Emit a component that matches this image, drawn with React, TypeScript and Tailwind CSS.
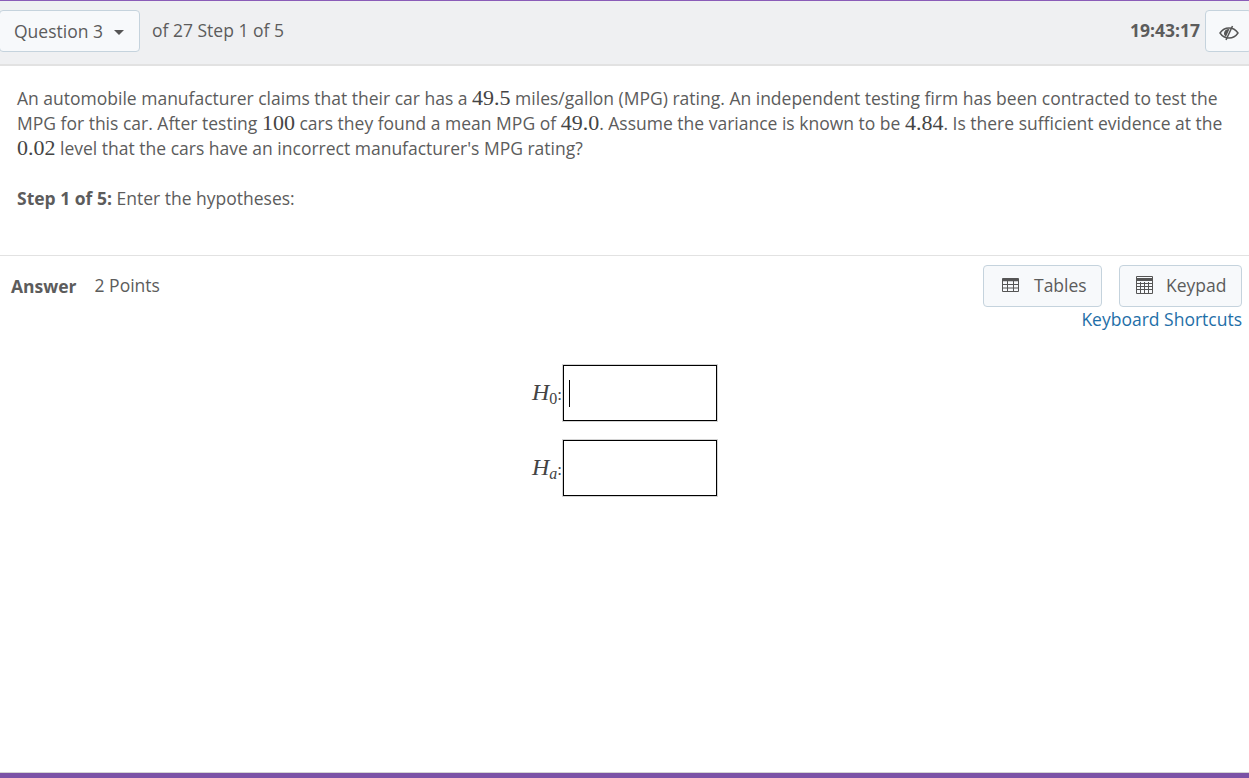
const sans = { fontFamily: '"Open Sans", sans-serif' };

function Num({ children }: { children: React.ReactNode }) {
  return <span className="font-['Liberation_Serif',serif] text-[22px] leading-none text-[#444]">{children}</span>;
}

function TableIcon() {
  return (
    <svg width="17" height="14" viewBox="0 0 17 14" className="text-[#555]">
      <path d="M0.5 0.5H16.5V13.5H0.5Z" fill="none" stroke="currentColor" />
      <path d="M0.5 2H16.5" stroke="currentColor" strokeWidth="2.5" />
      <path d="M1 6.5H16M1 10H16M5.5 3V13M11.5 3V13" stroke="currentColor" />
    </svg>
  );
}

function KeypadIcon() {
  return (
    <svg width="17" height="18" viewBox="0 0 17 18" className="text-[#555]">
      <path d="M0.5 0.5H16.5V17.5H0.5Z" fill="none" stroke="currentColor" />
      <path d="M1 3.5H16" stroke="currentColor" strokeWidth="3" fill="none" />
      <path d="M1 7.5H16M1 10.5H16M1 13.5H16M4.5 6V17M8.5 6V17M12.5 6V17" stroke="currentColor" />
    </svg>
  );
}

function EyeIcon() {
  return (
    <svg width="20" height="16" viewBox="0 0 20 16" fill="none" className="text-[#555]">
      <path d="M1 8C3 5 6.2 3 10 3S17 5 19 8C17 11 13.8 13 10 13S3 11 1 8Z" stroke="currentColor" strokeWidth="1.4" />
      <path d="M5 8.5C5 5.8 7.2 3.8 10.5 4L7 11.8C5.8 11 5 9.9 5 8.5Z" fill="currentColor" />
      <path d="M13.5 1L7 15" stroke="currentColor" strokeWidth="1.5" />
    </svg>
  );
}

function Hypothesis({ sub, caret }: { sub: string; caret?: boolean }) {
  return (
    <div className="flex items-center">
      <span className="-mt-[2px] flex w-[31px] items-baseline font-['Liberation_Serif',serif] text-[24px] leading-none text-[#444]">
        <i>H</i>
        <span className={`relative top-[4px] text-[16px] leading-none ${sub === "a" ? "italic" : ""}`}>{sub}</span>
        <span className="text-[17px] leading-none">:</span>
      </span>
      <div className="flex h-14 w-[154px] items-center border border-black pl-[5px] shadow-[0_0_0_1px_#d4d4d4]">
        {caret && <div className="h-[27px] w-px bg-black" />}
      </div>
    </div>
  );
}

export default function App() {
  return (
    <div className="flex h-[778px] flex-col overflow-hidden bg-white text-[17.5px] text-[#5c5c5c]" style={sans}>
      <header className="flex h-[66px] items-start border-t border-b-2 border-t-[#8a5cb8] border-b-[#e2e2e2] bg-[#eff0f2] pt-[9px]">
        <button className="-ml-px flex h-[42px] w-[141px] items-center rounded border border-[#c5d3dd] bg-[#f7f9fb] pl-[14px]">
          Question 3
          <span className="ml-[11px] mt-[2px] border-x-[5px] border-t-[5px] border-x-transparent border-t-[#555]" />
        </button>
        <span className="ml-3 mt-2 leading-6">of 27 Step 1 of 5</span>
        <span className="ml-auto mr-[5px] mt-2 font-bold leading-6">19:43:17</span>
        <button className="-mr-[3px] flex h-[42px] w-[47px] items-center justify-center rounded border border-[#c5d3dd] bg-[#f7f9fb] pt-[3px]">
          <EyeIcon />
        </button>
      </header>

      <section className="h-[190px] border-b border-[#e2e2e2] pl-[17px] pr-3 pt-5 leading-[25px]">
        <p>
          An automobile manufacturer claims that their car has a <Num>49.5</Num> miles/gallon (MPG) rating. An
          independent testing firm has been contracted to test the MPG for this car. After testing <Num>100</Num> cars
          they found a mean MPG of <Num>49.0</Num>. Assume the variance is known to be <Num>4.84</Num>. Is there
          sufficient evidence at the <Num>0.02</Num> level that the cars have an incorrect manufacturer's MPG rating?
        </p>
        <p className="mt-[25px]">
          <b>Step 1 of 5:</b> Enter the hypotheses:
        </p>
      </section>

      <section className="flex justify-between pl-[11px] pr-[7px] pt-[9px]">
        <div className="flex h-[42px] items-center pb-[2px]">
          <b className="mt-[2px]">Answer</b>
          <span className="ml-[18px]">2 Points</span>
        </div>
        <div className="flex flex-col items-end">
          <div className="flex gap-[17px]">
            <button className="flex h-[42px] w-[119px] items-center gap-[15px] rounded border border-[#c5d3dd] bg-[#f7f9fb] pb-[2px] pl-[18px]">
              <TableIcon />
              Tables
            </button>
            <button className="flex h-[42px] w-[123px] items-center gap-[13px] rounded border border-[#c5d3dd] bg-[#f7f9fb] pb-[2px] pl-4">
              <KeypadIcon />
              Keypad
            </button>
          </div>
          <a className="leading-[25px] text-[#1f6fa8]">Keyboard Shortcuts</a>
        </div>
      </section>

      <div className="ml-[532px] mt-[33px] flex flex-col gap-[19px]">
        <Hypothesis sub="0" caret />
        <Hypothesis sub="a" />
      </div>

      <footer className="mt-auto h-[6px] border-t border-t-[#d4d4d4] bg-[#7b52a6]" />
    </div>
  );
}
